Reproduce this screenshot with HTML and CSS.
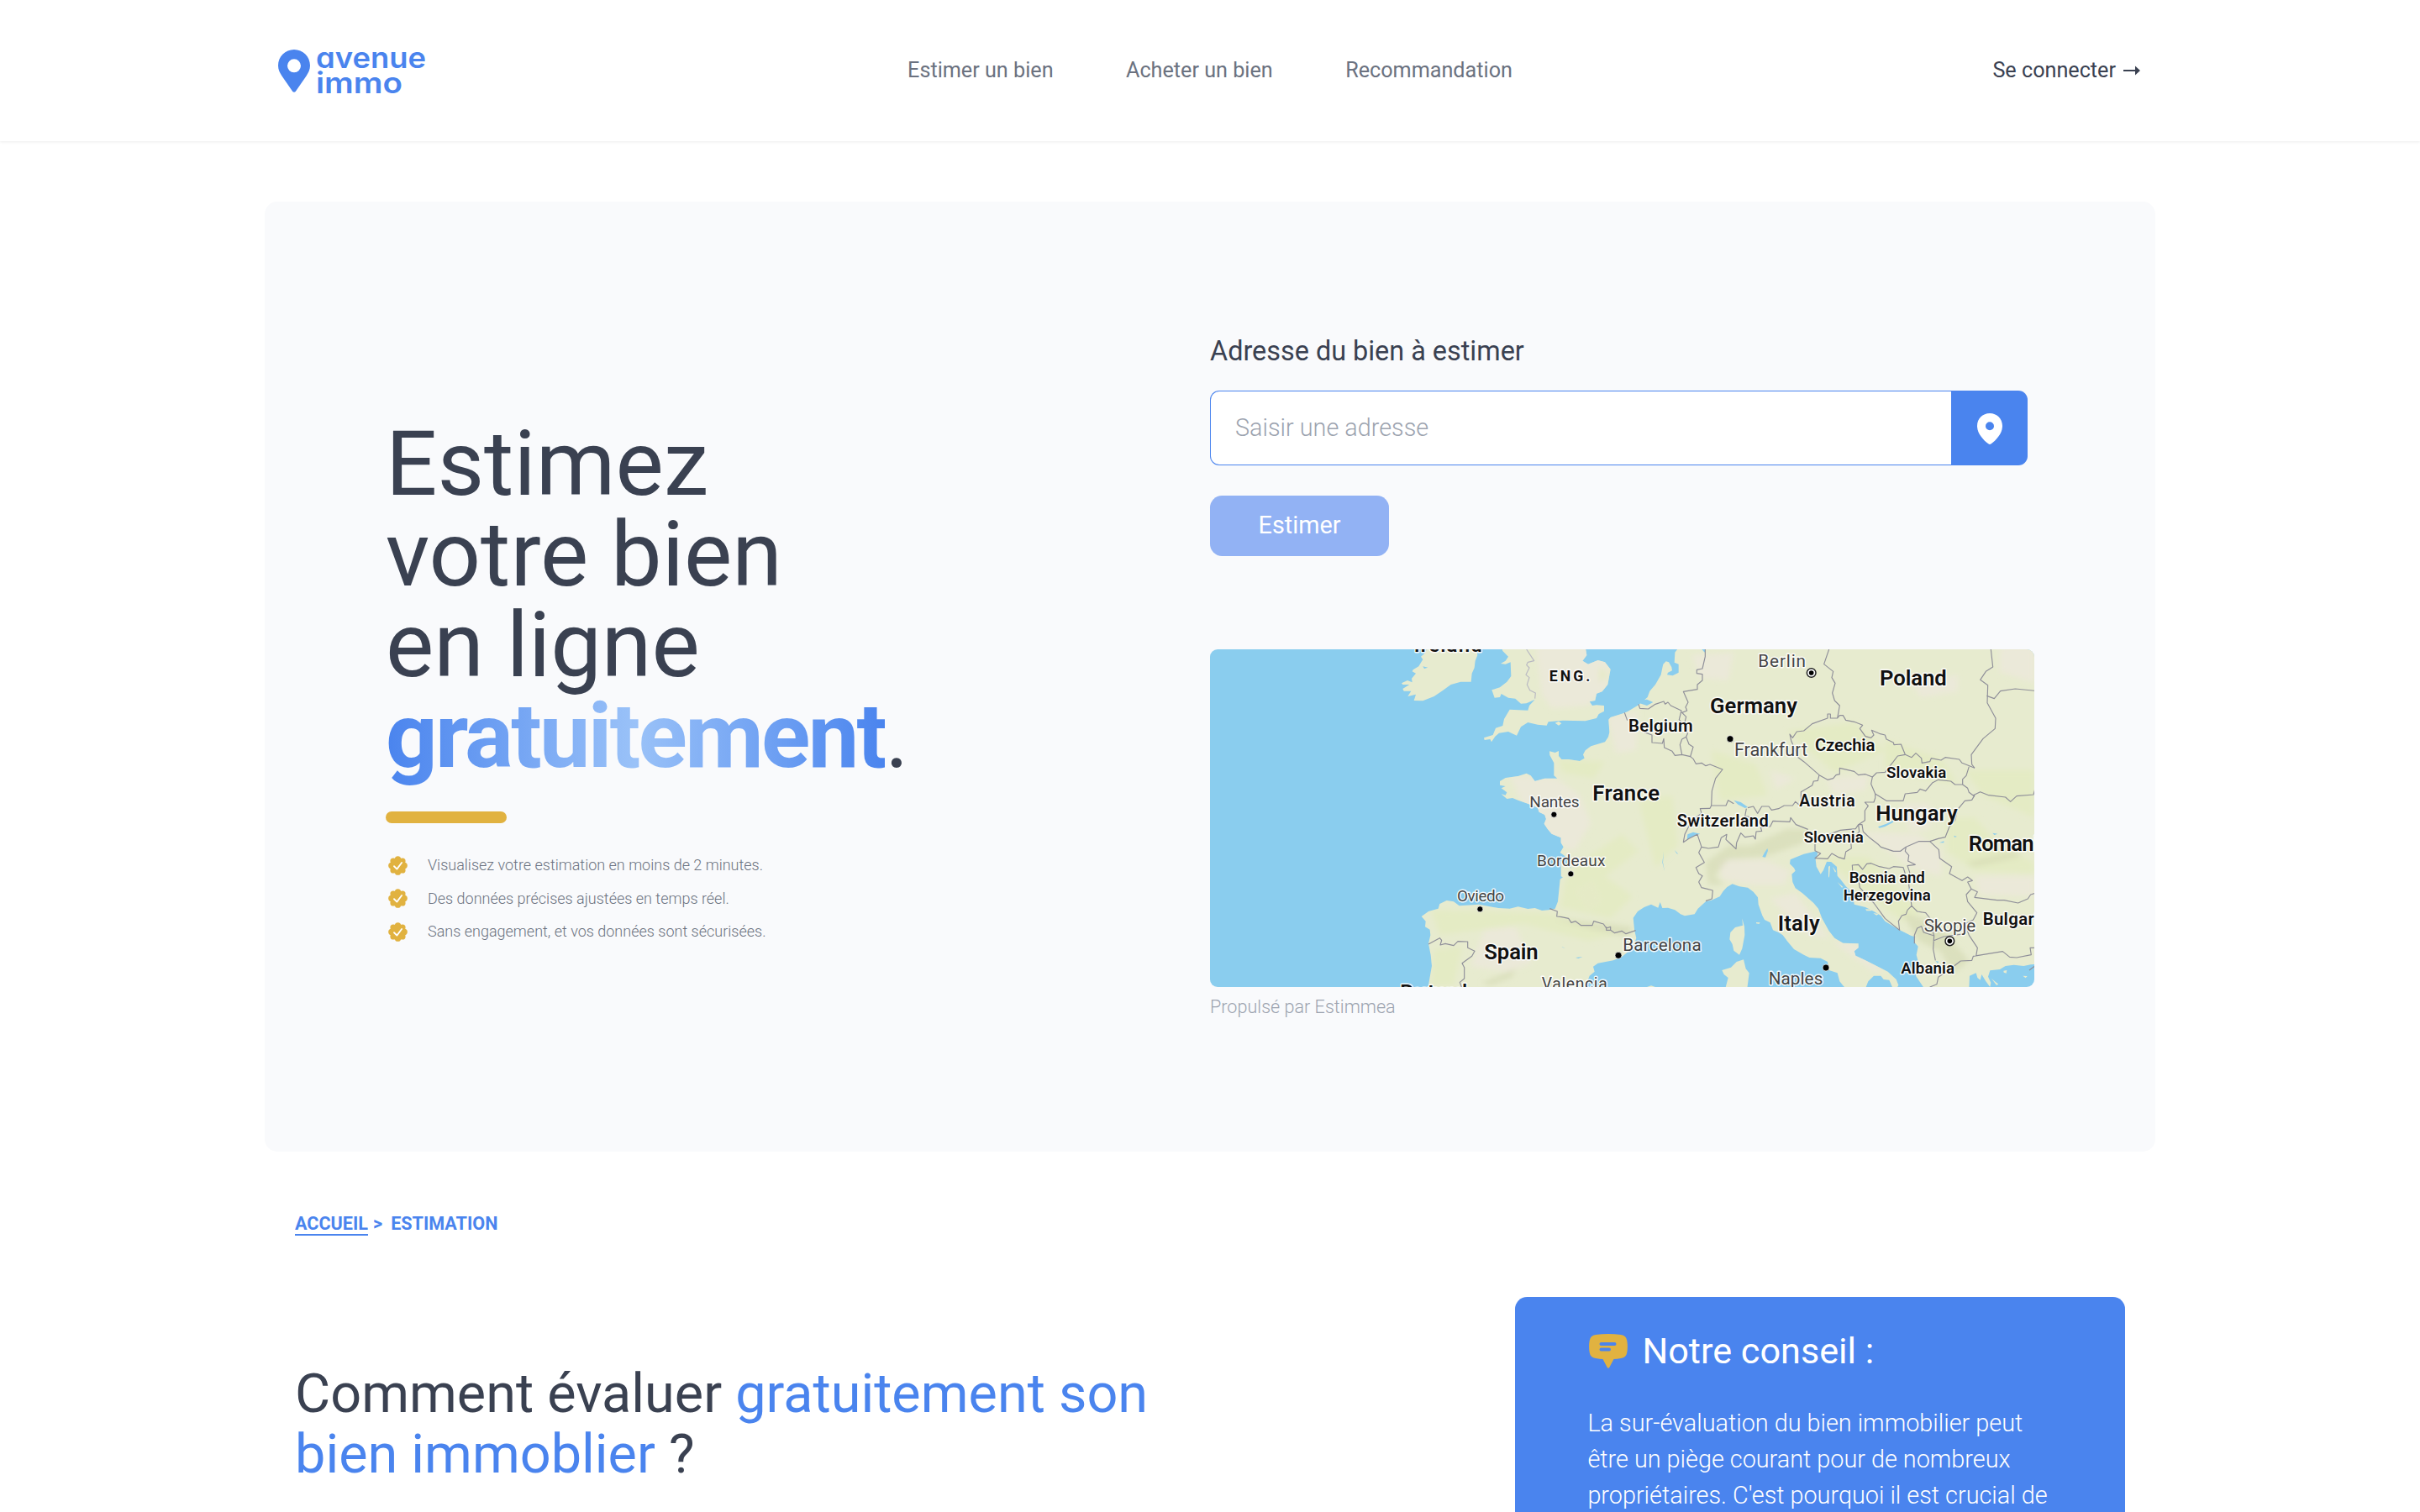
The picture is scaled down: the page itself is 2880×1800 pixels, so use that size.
FILE: index.html
```html
<!DOCTYPE html>
<html lang="fr">
<head>
<meta charset="utf-8">
<title>Avenue Immo – Estimation</title>
<link rel="stylesheet" href="styles.css">
</head>
<body>
<header class="header">
  <a class="logo">
    <svg class="logo-pin" viewBox="0 0 38 51"><path fill-rule="evenodd" d="M19 0C8.500 0 0 8.500 0 19C0 24 2 27.500 4.500 31.500L17.300 50C18.100 51.100 19.900 51.100 20.700 50L33.500 31.500C36 27.500 38 24 38 19C38 8.500 29.500 0 19 0ZM19 11.300a8 8 0 1 1 0 16a8 8 0 1 1 0-16Z"/></svg>
    <svg class="logo-text" viewBox="0 0 132 62"><text x="0" y="27.500" textLength="131" lengthAdjust="spacingAndGlyphs">avenue</text><text x="0" y="57.500" textLength="103" lengthAdjust="spacingAndGlyphs">immo</text></svg>
  </a>
  <nav class="nav"><a>Estimer un bien</a><a>Acheter un bien</a><a>Recommandation</a></nav>
  <a class="login">Se connecter
    <svg class="arrow" viewBox="0 0 20 12"><path d="M0 5h14V0.500L20 6l-6 5.500V7H0z"/></svg>
  </a>
</header>

<main class="page">
  <section class="hero">
    <div class="pitch">
      <h1>Estimez<br>votre bien<br>en ligne<br><span class="free">gratuitement</span>.</h1>
      <div class="rule"></div>
      <ul class="perks">
        <li><svg class="badge" viewBox="0 0 24 24"><use href="#seal"/></svg>Visualisez votre estimation en moins de 2 minutes.</li>
        <li><svg class="badge" viewBox="0 0 24 24"><use href="#seal"/></svg>Des données précises ajustées en temps réel.</li>
        <li><svg class="badge" viewBox="0 0 24 24"><use href="#seal"/></svg>Sans engagement, et vos données sont sécurisées.</li>
      </ul>
    </div>
    <form class="form">
      <label class="label">Adresse du bien à estimer</label>
      <div class="field">
        <div class="input">Saisir une adresse</div>
        <div class="locate"><svg viewBox="0 0 30 37"><path fill-rule="evenodd" d="M15 0C6.500 0 0 6.500 0 15C0 24 7 31.500 13.300 36.300Q15 37.600 16.700 36.300C23 31.500 30 24 30 15C30 6.500 23.500 0 15 0ZM15 10.200a5 5 0 1 1 0 10a5 5 0 1 1 0-10Z"/></svg></div>
      </div>
      <div class="submit">Estimer</div>
      <svg class="map" viewBox="30 39 2943 1206" preserveAspectRatio="none">
        <defs>
          <filter id="soft" x="-20%" y="-20%" width="140%" height="140%"><feGaussianBlur stdDeviation="9"/></filter>
          <path id="coast" d="M1705 30L1690 50L1688 86L1703 92L1703 122L1682 133L1662 130L1665 122L1680 115L1678 103L1668 85L1658 82L1648 92L1645 105L1640 130L1620 165L1600 188L1592 210L1560 238L1520 262L1505 268L1460 282L1453 290L1456 335L1452 352L1440 370L1390 385L1370 400L1362 415L1367 428L1350 438L1310 432L1285 432L1275 420L1275 402L1262 408L1242 403L1243 417L1258 445L1258 490L1270 500L1225 500L1190 510L1175 490L1160 482L1130 492L1085 498L1065 510L1065 524L1085 528L1070 535L1090 550L1085 560L1070 556L1090 573L1110 570L1130 578L1165 590L1200 605L1205 620L1225 630L1230 645L1223 662L1235 680L1250 698L1283 712L1283 730L1292 745L1280 765L1304 782L1320 822L1296 800L1283 795L1283 850L1290 853L1280 860L1272 940L1262 965L1240 970L1215 972L1190 963L1165 966L1130 958L1100 965L1060 963L1030 958L990 950L920 955L900 940L875 936L850 948L845 965L810 975L785 993L800 1010L798 1030L815 1040L817 1060L810 1090L818 1130L822 1170L815 1210L808 1250H1372L1375 1232L1385 1205L1403 1190L1398 1172L1415 1160L1470 1150L1500 1138L1540 1105L1552 1070L1545 1040L1541 998L1557 975L1580 960L1605 950L1630 962L1637 942L1645 963L1665 962L1690 970L1710 985L1725 991L1760 985L1772 965L1800 940L1820 935L1850 922L1862 903L1876 888L1895 877L1920 886L1950 890L1970 905L1986 925L1988 950L2002 990L2010 1005L2030 1015L2040 1042L2060 1050L2075 1060L2090 1080L2115 1110L2150 1130L2170 1140L2210 1142L2235 1155L2240 1185L2270 1195L2278 1225L2290 1240L2300 1250H2370L2380 1225L2400 1205L2425 1205L2435 1218L2455 1220L2468 1250H2482L2488 1238L2480 1218L2450 1190L2410 1170L2370 1150L2335 1133L2330 1117L2345 1105L2345 1090L2290 1088L2260 1070L2240 1045L2215 1000L2202 965L2185 945L2145 910L2120 892L2110 870L2107 842L2120 830L2115 820L2100 805L2102 790L2120 782L2150 770L2195 760L2200 768L2192 790L2195 815L2210 842L2220 828L2232 797L2248 798L2268 815L2270 848L2282 862L2300 885L2325 910L2330 950L2370 960L2400 975L2425 990L2440 1010L2490 1040L2520 1055L2545 1068L2545 1085L2558 1100L2552 1130L2560 1160L2550 1205L2570 1235L2580 1250H2740L2742 1205L2765 1195L2770 1212L2780 1220L2785 1200L2800 1225L2815 1245L2818 1230L2808 1208L2815 1186L2850 1182L2870 1170L2900 1166L2935 1170L2960 1165L2990 1162V30Z"/>
          <path id="isles" d="M805 30L800 50L783 65L790 75L775 100L755 112L752 118L765 125L750 143L752 157L735 150L714 160L718 165L742 165L718 180L722 188L748 188L736 207L765 200L758 222L790 223L830 207L860 187L890 165L925 155L962 155L965 125L974 105L977 80L985 60L980 30ZM1070 30L1075 45L1095 65L1085 80L1068 90L1085 92L1103 85L1105 135L1090 155L1065 175L1036 184L1046 212L1065 210L1070 198L1095 212L1120 215L1140 233L1160 232L1190 218L1170 240L1165 257L1100 254L1080 288L1075 312L1050 320L1040 345L1008 355L1010 363L1030 360L1035 370L1048 350L1062 338L1095 333L1125 347L1140 316L1165 300L1200 308L1232 311L1238 298L1290 293L1370 295L1410 285L1418 270L1437 260L1437 240L1410 238L1395 240L1385 226L1405 222L1410 197L1430 190L1450 165L1460 110L1440 85L1415 78L1380 92L1360 80L1375 60L1370 30ZM1930 1000L1932 1025L1905 1032L1888 1050L1885 1075L1895 1092L1900 1115L1920 1130L1930 1108L1939 1060L1938 1030ZM1858 1185L1890 1175L1910 1155L1935 1147L1943 1180L1955 1195L1948 1250H1870L1880 1212L1865 1200ZM1262 302L1275 296L1285 304L1275 311ZM1980 1014L1994 1015L1990 1020L1980 1018ZM1590 1245L1605 1240L1620 1245ZM2238 815L2244 812L2241 850L2238 855ZM2253 815L2265 832L2262 836ZM2270 870L2290 888L2286 890ZM2370 967L2395 968L2390 973L2374 973ZM2398 982L2418 983L2410 989ZM2863 1187L2875 1185L2873 1196L2864 1193ZM2932 1205L2948 1206L2942 1213ZM2820 1215L2845 1235L2838 1238Z"/>
          <clipPath id="land"><use href="#coast"/><use href="#isles"/></clipPath>
        </defs>
        <rect class="sea" x="30" y="39" width="2943" height="1206"/>
        <use class="land" href="#coast"/><use class="land" href="#isles"/>
        <g clip-path="url(#land)"><g filter="url(#soft)">
          <path class="sand" d="M1195 30H1460L1450 180L1380 240L1250 250L1215 200ZM1100 490L1270 500L1350 560L1390 660L1330 760L1240 720L1150 600ZM1450 280L1560 260L1550 400L1480 410ZM1010 1040L1120 1030L1180 1160L1090 1190L960 1170ZM1330 900L1400 860L1430 940L1380 980ZM1840 790L2010 790L2100 830L2080 880L1960 880L1860 860ZM2030 930L2120 910L2180 990L2240 1070L2170 1060L2080 980ZM2350 690L2560 700L2640 760L2640 850L2540 820ZM2760 850L2975 850V920L2780 915ZM2530 160L2700 130L2700 190L2570 210ZM2850 30L2975 30V160L2850 120ZM1750 60L1900 50L1880 150L1780 140ZM2030 470L2120 500L2050 540ZM2230 500L2380 490L2370 540L2260 560ZM2500 590L2600 590L2600 680L2530 690ZM2250 1080L2340 1090L2440 1190L2400 1190Z"/>
          <path class="grass" d="M820 970L1240 980L1480 1060L1380 1080L1150 1020L850 1060ZM830 1110L930 1100L900 1240L820 1240ZM1300 860L1350 800L1500 700L1560 760L1440 850L1540 920L1460 1000L1280 960ZM1560 580L1680 560L1700 740L1620 820ZM1820 400L1980 450L2020 560L1850 580ZM2090 330L2330 300L2440 400L2260 480ZM2440 360L2640 430L2700 520L2440 480ZM2720 470L2973 470V640L2790 560ZM2660 640L2760 640L2850 740L2973 800V840L2760 830L2660 760ZM2210 780L2380 780L2570 980L2500 1010ZM1270 430L1440 440L1400 500L1290 480ZM1420 100L1450 130L1420 160Z"/>
          <path class="hill" d="M1250 1000L1540 1030L1520 1065L1400 1040ZM1800 800L1880 740L1960 740L2090 680L2160 680L2150 730L2010 780L1880 790L1830 850L1870 880L1810 880ZM1000 1230L1120 1180L1110 1210L1030 1240ZM2730 800L2900 760L2930 780L2760 815ZM2500 980L2620 1010L2740 1150L2680 1200L2640 1120L2560 1080Z"/>
        </g></g>
        <g class="lakes">
          <path d="M1900 578L1925 585L1950 602L1940 606L1915 593ZM1733 720L1735 700L1755 692L1780 698L1760 705L1745 712ZM2002 780L2010 765L2020 750L2022 758L2013 782ZM2415 673L2445 662L2468 650L2470 656L2440 672L2420 677ZM2634 730L2650 724L2650 730ZM1688 755L1702 770L1696 768ZM1650 760L1647 800L1653 832L1645 800ZM790 100L808 104L795 108ZM1285 1100L1300 1108L1290 1104ZM1335 1140L1360 1137L1345 1143ZM1560 222L1590 218L1612 228L1590 240L1565 232ZM2686 704L2697 708L2688 710ZM2824 695L2842 698L2830 702ZM2534 1063L2548 1065L2546 1072ZM1786 39H1799L1796 50ZM2620 1152L2632 1154L2628 1160Z"/>
        </g>
        <g class="borders">
          <path class="faint" d="M1160 39L1187 80L1165 85L1160 95L1170 105L1158 130L1170 140L1162 165L1172 185L1192 195L1190 215"/>
          <path d="M1243 965L1270 975L1268 993L1285 995L1310 1000L1320 1015L1335 1010L1355 1025L1395 1025L1400 1010L1435 1020L1445 1035L1460 1030L1460 1042L1445 1042L1445 1030M1460 1042L1475 1052L1500 1045L1515 1055L1550 1043M810 1092L850 1070L857 1078L852 1095L870 1090L900 1097L915 1082L950 1083L950 1105L975 1117L965 1135L930 1160L938 1175L938 1215L922 1228L928 1245"/>
          <g transform="translate(1500 0)">
            <path d="M298 39L298 65L288 108L268 112L268 125L288 128L288 150L270 165L270 182L220 190L237 228L228 245L233 258L215 265L230 280L222 310L235 340L230 352M60 235L65 250L95 252L120 235L150 225L155 235L165 228L175 240L213 258L205 290L222 310M10 265L20 293M80 335L108 345L108 372L145 375L150 358L152 390L180 403L190 418L215 415M230 352L215 360L208 380L215 415L245 422L255 388L240 378L230 352"/>
            <path d="M245 422L255 430L265 448L285 445L300 455L315 450L360 468L335 500L322 545L320 597L372 597L380 578L400 590M320 597L315 607L280 608L285 625L250 650L225 700L220 728L240 715L270 700L285 745L310 750L345 745L355 712L375 700L372 718L390 735L408 752L410 730L425 695L440 710L470 705L477 717L480 690L500 688L496 675L530 672L540 652L600 655L603 640L622 665L665 682M445 608L440 635L470 640M450 605L470 600L485 625L500 600L525 600L535 613L560 608L580 597L610 597L620 583L640 600L640 548L680 525L685 510L700 508L705 488"/>
            <path d="M285 745L275 765L295 800L265 818L275 840L288 848L275 870L285 890L325 900L322 930L300 938M740 39L722 92L755 118L750 140L762 160L752 195L760 222L778 240L770 285L745 285L745 270L735 270L735 285L680 305L650 330L625 333L610 355L600 342L605 365L630 425L650 440L705 488L735 505L755 500L765 488L778 485L778 463L830 475L845 488L870 485L895 495M770 285L778 275L790 275L800 292L830 298L860 310L850 322L870 350L890 355L900 345L892 328L920 340L940 345L945 360L970 372L972 380L997 378L1012 415L985 420L970 440L940 478L910 480L895 495M1012 415L1035 425L1050 410L1070 428L1072 445L1100 440L1105 428L1140 435L1155 425L1205 432L1215 445L1260 463"/>
            <path d="M1318 39L1325 102L1300 118L1280 148L1307 167L1305 230L1335 285L1333 322L1290 358L1248 415L1250 450L1260 463M1303 205L1330 215L1352 188L1405 180L1475 187M1240 458L1230 490L1217 503L1217 522L1235 535L1240 550L1260 565M895 495L890 520L905 555L945 580L1005 580L1012 555L1055 550L1065 538L1085 545L1110 515L1130 505L1175 510L1190 522L1217 522M1255 560L1280 548L1310 560L1370 567L1388 583L1410 563L1470 558L1475 540M1260 560L1250 577L1225 580L1200 610L1190 650L1170 672L1155 710L1130 715L1100 725M905 555L905 570L900 585L868 585L880 598L868 615L868 650L845 665L835 680L780 685L740 700M690 735L690 758L710 768L690 785L735 787L750 768L775 782L795 788L800 762L820 750L818 725L848 690L845 665L858 665L862 690L885 712L915 735L925 745L970 760L995 760L1015 745L1060 725L1100 725"/>
            <path d="M1015 745L1012 760L1025 775L1022 795L1048 808L1020 812L1028 835L1025 880L1035 955L1020 970L1015 985L1000 990L988 1010L992 1042L940 1000L900 945L850 890L845 860L825 840L823 810L845 808L860 825L875 805L890 803L920 815L955 822L970 815L1005 818L1012 840M1035 955L1055 975L1085 980L1105 1005L1110 1045L1115 1060L1112 1110L1120 1150M1100 725L1132 755L1135 785L1178 815L1170 840L1215 865L1235 852L1252 865L1235 870L1248 895L1270 905L1260 925L1340 935L1365 935L1415 945L1450 930L1460 915L1475 910M1248 895L1230 915L1235 940L1268 980L1255 1005L1225 1020L1240 1060L1270 1105L1265 1135M1475 1105H1458L1462 1130L1410 1140L1385 1138L1360 1118L1255 1135L1250 1150L1210 1152L1160 1190L1130 1210L1125 1235L1100 1245M1475 1170L1455 1185M1045 1090L1045 1060L1055 1035L1070 1028L1078 1050L1115 1062L1112 1110M1112 1080L1150 1065L1225 1055"/>
          </g>
        </g>
        <g class="cities">
          <circle cx="1258" cy="629" r="10.500"/><circle cx="1318" cy="841" r="10.500"/><circle cx="994" cy="967" r="10.500"/><circle cx="1488" cy="1132" r="12"/><circle cx="1887" cy="359" r="12"/><circle cx="2229" cy="1176" r="12"/>
          <g class="capital"><circle class="ring" cx="2177" cy="123" r="16"/><circle cx="2177" cy="123" r="8.500"/><circle class="ring" cx="2671" cy="1081" r="16"/><circle cx="2671" cy="1081" r="8.500"/></g>
        </g>
        <g class="names">
          <g class="town">
            <text x="1171" y="602" font-size="57" textLength="178">Nantes</text>
            <text x="1197" y="813" font-size="57" textLength="244">Bordeaux</text>
            <text x="912" y="938" font-size="57" textLength="168">Oviedo</text>
            <text x="1504" y="1115" font-size="62" textLength="280">Barcelona</text>
            <text x="1214" y="1253" font-size="58" textLength="234">Valencia</text>
            <text x="1987" y="102" font-size="62" textLength="170">Berlin</text>
            <text x="1902" y="420" font-size="65" textLength="261">Frankfurt</text>
            <text x="2579" y="1047" font-size="62" textLength="185">Skopje</text>
            <text x="2024" y="1237" font-size="62" textLength="194">Naples</text>
          </g>
          <g class="country">
            <text x="758" y="49" font-size="72" textLength="243">Ireland</text>
            <text class="region" x="1241" y="154" font-size="53" textLength="146">ENG.</text>
            <text x="1396" y="580" font-size="77" textLength="239">France</text>
            <text x="1009" y="1145" font-size="77" textLength="193">Spain</text>
            <text x="709" y="1288" font-size="72" textLength="240">Portugal</text>
            <text x="1815" y="268" font-size="77" textLength="312">Germany</text>
            <text x="2421" y="168" font-size="77" textLength="239">Poland</text>
            <text x="1524" y="334" font-size="61" textLength="230">Belgium</text>
            <text x="2190" y="401" font-size="61" textLength="214">Czechia</text>
            <text x="2445" y="498" font-size="56" textLength="214">Slovakia</text>
            <text x="2134" y="600" font-size="58" textLength="199">Austria</text>
            <text x="2407" y="650" font-size="77" textLength="292">Hungary</text>
            <text x="1697" y="671" font-size="60" textLength="327">Switzerland</text>
            <text x="2150" y="729" font-size="56" textLength="213">Slovenia</text>
            <text x="2738" y="760" font-size="77" textLength="290">Romania</text>
            <text x="2312" y="872" font-size="56" textLength="270">Bosnia and</text>
            <text x="2291" y="937" font-size="56" textLength="312">Herzegovina</text>
            <text x="2057" y="1045" font-size="77" textLength="150">Italy</text>
            <text x="2789" y="1022" font-size="61" textLength="234">Bulgaria</text>
            <text x="2497" y="1197" font-size="56" textLength="191">Albania</text>
          </g>
        </g>
      </svg>
      <p class="credit">Propulsé par Estimmea</p>
    </form>
  </section>

  <div class="content">
    <p class="crumbs"><a>ACCUEIL</a><span>&gt;</span><span>ESTIMATION</span></p>
    <div class="columns">
      <h2>Comment évaluer <em>gratuitement son<br>bien immoblier</em> ?</h2>
      <aside class="advice">
        <h3><svg class="bubble" viewBox="0 0 46 41"><path fill-rule="evenodd" d="M8 1Q23-1 38 1Q44.500 2 45.300 8Q46.500 15 45.300 22Q44.500 28 38 29Q33 30 29.500 30L24.500 39.500Q23 42 21.500 39.500L16.500 30Q13 30 8 29Q1.500 28 .700 22Q-.500 15 .700 8Q1.500 2 8 1ZM14.500 10a2 2 0 0 0 0 4H30.500a2 2 0 0 0 0-4ZM14.500 16.500a2 2 0 0 0 0 4H24a2 2 0 0 0 0-4Z"/></svg>Notre conseil :</h3>
        <p>La sur-évaluation du bien immobilier peut<br>être un piège courant pour de nombreux<br>propriétaires. C'est pourquoi il est crucial de</p>
      </aside>
    </div>
  </div>
</main>

<svg class="sprite">
  <symbol id="seal" viewBox="0 0 24 24">
    <g class="seal"><circle cx="12" cy="12" r="9.500"/><circle cx="12" cy="4" r="3.800"/><circle cx="12" cy="20" r="3.800"/><circle cx="4" cy="12" r="3.800"/><circle cx="20" cy="12" r="3.800"/><circle cx="6.300" cy="6.300" r="3.800"/><circle cx="17.700" cy="6.300" r="3.800"/><circle cx="6.300" cy="17.700" r="3.800"/><circle cx="17.700" cy="17.700" r="3.800"/></g>
    <path class="tick" d="M7.300 12.800L10.800 16.300L16.800 8.300"/>
  </symbol>
</svg>
</body>
</html>
```
FILE: styles.css
```css
* { box-sizing: border-box; margin: 0; padding: 0; }
body {
  height: 1800px;
  overflow: hidden;
  background: #fff;
  color: #3a4151;
  font-family: Roboto, "Liberation Sans", sans-serif;
  font-size: 28.8px;
  line-height: 43.2px;
}
.sprite { display: none; }

.header {
  display: grid;
  grid-template-columns: 1fr auto 1fr;
  align-items: center;
  height: 168px;
  padding: 0 331px;
  box-shadow: 0 1px 4px rgba(0, 0, 0, .08);
  font-size: 25.2px;
  line-height: 36px;
}
.logo { display: flex; gap: 7px; align-items: center; }
.logo-pin { width: 38px; height: 51px; fill: #4a84ee; }
.logo-text { width: 132px; height: 62px; overflow: visible; fill: #4a84ee; }
.logo-text text {
  font-family: Inter, "Liberation Sans", sans-serif;
  font-size: 34.500px;
  font-weight: 600;
  font-feature-settings: "cv11";
}
.nav { display: flex; gap: 86.4px; color: #6b7280; }
.login { display: flex; justify-content: flex-end; align-items: center; gap: 9px; padding-right: 2px; }
.arrow { width: 20px; height: 12px; fill: #3a4151; }

.page { padding: 72px 315px 0; }
.hero {
  display: grid;
  grid-template-columns: 981px 981px;
  height: 1131px;
  padding: 0 144px;
  border-radius: 15px;
  background: #f9fafc;
}
.pitch { padding-top: 258px; }
h1 { font-size: 108px; line-height: 108px; font-weight: 400; }
.free {
  font-weight: 700;
  letter-spacing: -.025em;
  color: transparent;
  background: linear-gradient(to right, #4a84ee, #9ac2f8, #4a84ee);
  -webkit-background-clip: text;
  background-clip: text;
}
.rule { width: 144px; height: 14px; margin-top: 36px; border-radius: 7px; background: #e1b240; }
.perks {
  display: grid;
  gap: 10.8px;
  margin-top: 36px;
  list-style: none;
  color: #6b7280;
  font-size: 18px;
  font-weight: 300;
  line-height: 28.8px;
}
.perks li { display: flex; align-items: center; gap: 24px; padding-left: 3px; }
.badge { width: 23px; height: 23px; }
.seal { fill: #e1b240; }
.tick { fill: none; stroke: #fff; stroke-width: 1.9; stroke-linecap: round; stroke-linejoin: round; }

.form { padding-top: 152.6px; }
.label { display: block; font-size: 32.4px; line-height: 50.4px; }
.field { display: flex; width: 973px; height: 89px; margin-top: 22px; }
.input {
  flex: 1;
  padding-left: 29px;
  border: 1px solid #4a84ee;
  border-right: 0;
  border-radius: 11px 0 0 11px;
  background: #fff;
  color: #9ca3af;
  font-weight: 300;
  line-height: 87px;
}
.locate {
  display: flex;
  align-items: center;
  justify-content: center;
  width: 91px;
  border-radius: 0 11px 11px 0;
  background: #4a84ee;
}
.locate svg { width: 30px; height: 37px; margin-top: 2px; fill: #fff; }
.submit {
  width: 213px;
  height: 72px;
  margin-top: 36px;
  border-radius: 14.4px;
  background: #92b2f4;
  color: #fff;
  line-height: 70px;
  text-align: center;
}
.map { display: block; width: 981px; height: 402px; margin-top: 111px; border-radius: 9px; }
.sea, .lakes { fill: #8acdee; }
.land { fill: #e7ebcf; }
.sand { fill: #ece9da; opacity: .85; }
.grass { fill: #e3ebc0; opacity: .75; }
.hill { fill: #d3d9b2; opacity: .6; }
.borders path { fill: none; stroke: #8f8f99; stroke-width: 3.500; stroke-linejoin: round; }
.borders .faint { stroke: #b9b9c2; }
.cities { fill: #000; stroke: #fff; stroke-width: 2; }
.capital { stroke: none; }
.capital .ring { fill: #fff; stroke: #222; stroke-width: 4.500; }
.names { paint-order: stroke; stroke: rgba(255, 255, 255, .85); stroke-width: 9; stroke-linejoin: round; }
.town { fill: #444; }
.country { fill: #111; font-weight: 600; }
.region { font-weight: 700; }
.credit { margin-top: 10px; color: #9ca3af; font-size: 21.6px; font-weight: 300; line-height: 28.8px; }

.content { padding: 72px 36px 0; }
.crumbs { display: flex; color: #4a84ee; font-size: 21.6px; font-weight: 700; line-height: 28.8px; }
.crumbs a { height: 28px; border-bottom: 2px solid #4a84ee; }
.crumbs span { margin-left: 6px; }
.crumbs span + span { margin-left: 10px; }
.columns { display: grid; grid-template-columns: 1fr 726px; margin-top: 72.200px; }
h2 { padding-top: 79px; font-size: 64.8px; font-weight: 400; line-height: 72px; }
h2 em { font-style: normal; color: #4a84ee; }
.advice {
  height: 256px;
  padding: 36px 86.4px 0;
  border-radius: 14.4px 14.4px 0 0;
  background: #4a84ee;
  color: #fff;
  white-space: nowrap;
}
.advice h3 { display: flex; align-items: center; gap: 17px; padding-left: 2px; font-size: 43.2px; font-weight: 400; line-height: 57.6px; }
.advice p { margin-top: 35px; font-weight: 300; }
.bubble { width: 46px; height: 41px; fill: #e1b240; }
```
